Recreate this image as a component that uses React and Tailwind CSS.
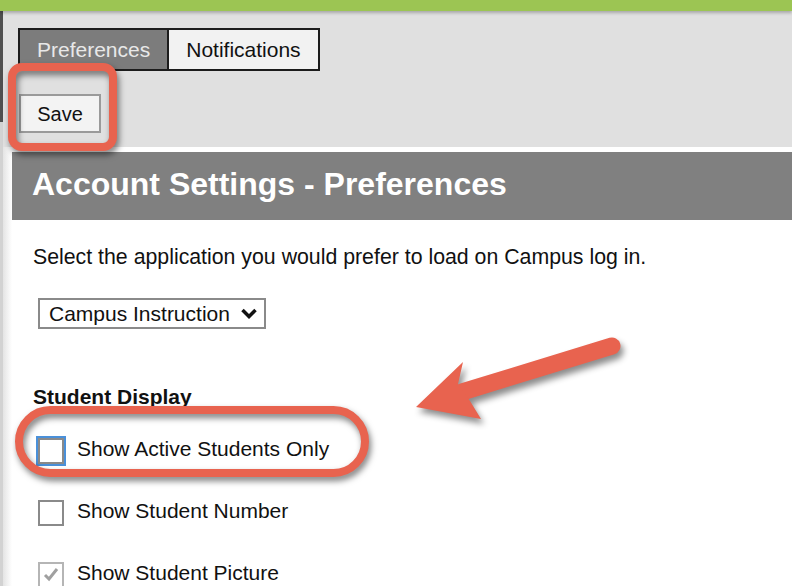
export default function App() {
  const rows = [
    { label: 'Show Active Students Only', focused: true, checked: false },
    { label: 'Show Student Number', focused: false, checked: false },
    { label: 'Show Student Picture', focused: false, checked: true },
  ];

  return (
    <div className="relative h-[586px] w-[792px] overflow-hidden bg-white font-['Liberation_Sans',Arial,sans-serif] text-[#111]">
      <div className="relative z-10 h-[11px] bg-[#9cc553] shadow-[0_2px_3px_rgba(0,0,0,0.25)]" />

      <div className="flex">
        <div className="flex w-[3px] flex-col">
          <div className="h-[111px] bg-[#4f4f4f]" />
          <div className="h-[500px] bg-[#d2d2d2]" />
        </div>

        <div className="flex flex-1 flex-col">
          {/* toolbar */}
          <div className="h-[136px] bg-[#e0e0e0] pl-[15px] pt-[17px]">
            <div className="flex h-[43px] w-fit border-2 border-[#1c1c1c] text-[21px]">
              <div className="flex items-center bg-[#7c7c7c] px-[17px] text-[#e8e8e8]">Preferences</div>
              <div className="flex items-center border-l-2 border-[#1c1c1c] bg-[#f2f2f2] px-[17px]">Notifications</div>
            </div>
            <div className="ml-[1px] mt-[23px] flex h-[39px] w-[82px] items-center justify-center border-2 border-[#9a9a9a] bg-[#f3f3f3] text-[20px]">
              Save
            </div>
          </div>

          <div className="flex">
            <div className="w-[9px] bg-linear-to-r from-[#e4e4e4] to-white" />
            <div className="flex-1">
              <div className="h-[5px] bg-white" />
              <div className="h-[68px] bg-[#808080] pl-[20px] pt-[16px] text-[32px] font-bold leading-[32px] text-white">
                Account Settings - Preferences
              </div>

              <div className="pl-[21px] pt-[25px]">
                <p className="text-[21.3px] leading-[24px]">
                  Select the application you would prefer to load on Campus log in.
                </p>

                <div className="ml-[5px] mt-[29px] flex h-[31px] w-[228px] items-center border-2 border-[#8a8a8a] pl-[9px] text-[21px]">
                  <span>Campus Instruction</span>
                  <svg className="ml-auto mr-[7px]" width="16" height="11" viewBox="0 0 16 11">
                    <polyline points="1.5,2 8,8.5 14.5,2" fill="none" stroke="#111" strokeWidth="3.5" />
                  </svg>
                </div>

                <div className="mt-[56px] text-[21px] font-bold leading-[24px]">Student Display</div>

                <div className="mt-[11px]">
                  {rows.map((row) => (
                    <div key={row.label} className="flex h-[62px] items-center gap-[13px]">
                      <div
                        className={
                          row.focused
                            ? 'ml-[5px] flex h-[26px] w-[26px] items-center justify-center border-2 border-[#8a8a8a] bg-white outline-2 outline-[#4a90d9]'
                            : row.checked
                            ? 'ml-[5px] flex h-[26px] w-[26px] items-center justify-center border-2 border-[#b5b5b5] bg-white'
                            : 'ml-[5px] flex h-[26px] w-[26px] items-center justify-center border-2 border-[#8a8a8a] bg-white'
                        }
                      >
                        {row.checked && (
                          <svg width="18" height="16" viewBox="0 0 18 16">
                            <polyline points="3,8 7,12 15,2" fill="none" stroke="#a0a0a0" strokeWidth="3" />
                          </svg>
                        )}
                      </div>
                      <span className="pb-[4px] text-[21px] leading-[24px]">{row.label}</span>
                    </div>
                  ))}
                </div>
              </div>
            </div>
          </div>
        </div>
      </div>

      {/* callouts */}
      <div className="absolute left-[8px] top-[63px] h-[88px] w-[109px] rounded-[14px] border-[8px] border-[#e8634f] drop-shadow-[2px_4px_3px_rgba(0,0,0,0.5)]" />
      <div className="absolute left-[15px] top-[406px] h-[71px] w-[354px] rounded-full border-[8px] border-[#e8634f] drop-shadow-[2px_4px_3px_rgba(0,0,0,0.5)]" />
      <svg
        className="absolute left-0 top-0 drop-shadow-[3px_5px_3px_rgba(0,0,0,0.45)]"
        width="792"
        height="586"
        viewBox="0 0 792 586"
      >
        <line x1="612" y1="346" x2="462" y2="392" stroke="#e8634f" strokeWidth="17" strokeLinecap="round" />
        <polygon points="416,407 463,362 458,384 470,401 481,419" fill="#e8634f" />
      </svg>
    </div>
  );
}
